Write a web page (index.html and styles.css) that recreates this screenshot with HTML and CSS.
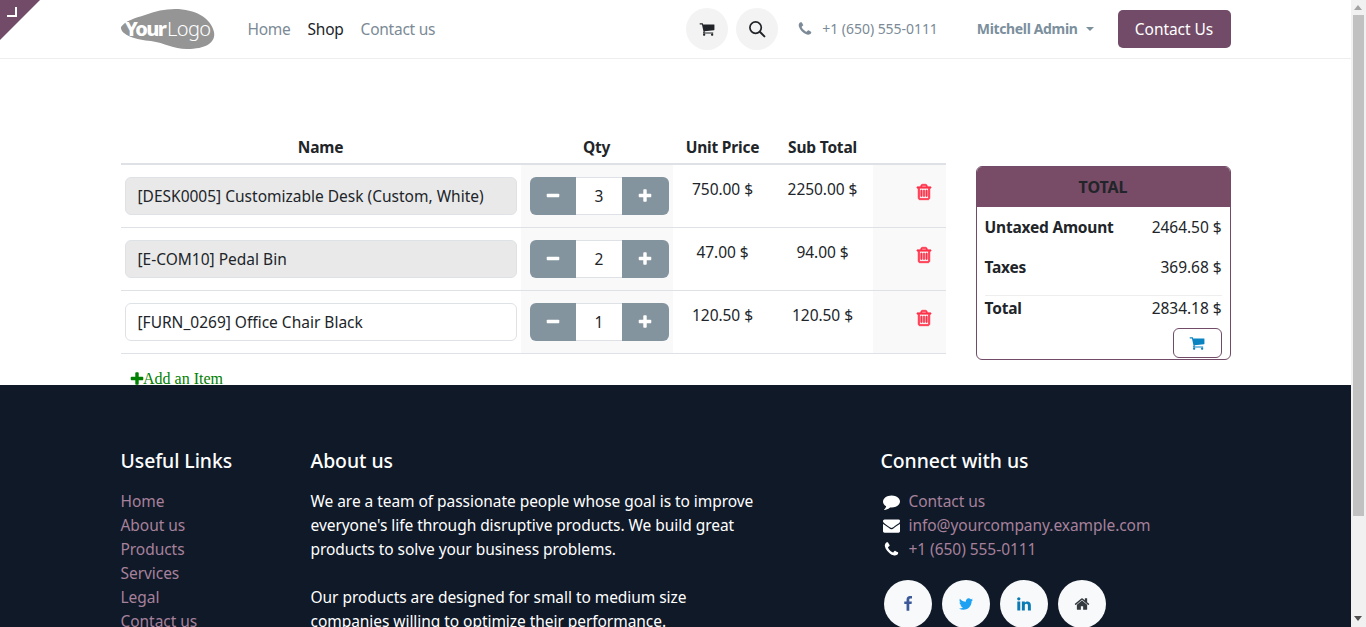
FILE: index.html
```html
<!DOCTYPE html>
<html lang="en">
<head>
<meta charset="utf-8">
<title>Shop</title>
<link rel="stylesheet" href="styles.css">
</head>
<body>
<svg class="sprite" aria-hidden="true">
  <symbol id="i-cart" viewBox="0 0 1792 1792"><path d="M704 1536q0 52-38 90t-90 38-90-38-38-90 38-90 90-38 90 38 38 90zm896 0q0 52-38 90t-90 38-90-38-38-90 38-90 90-38 90 38 38 90zm128-1088v512q0 24-16.5 42.5t-40.5 21.5l-1044 122q13 60 13 70 0 16-24 64h920q26 0 45 19t19 45-19 45-45 19h-1024q-26 0-45-19t-19-45q0-11 8-31.5t16-36 21.5-40 15.5-29.5l-177-823h-204q-26 0-45-19t-19-45 19-45 45-19h256q16 0 28.5 6.5t19.5 15.5 13 24.5 8 26 5.5 29.5 4.5 26h1201q26 0 45 19t19 45z"/></symbol>
  <symbol id="i-search" viewBox="0 0 18 18"><circle cx="7.6" cy="7.6" r="5.7" fill="none" stroke="currentColor" stroke-width="1.7"/><path d="M11.8 11.8l4.6 4.6" fill="none" stroke="currentColor" stroke-width="2" stroke-linecap="round"/></symbol>
  <symbol id="i-phone" viewBox="0 0 1792 1792"><path d="M1600 1240q0 27-10 70.5t-21 68.5q-21 50-122 106-94 51-186 51-27 0-53-3.5t-57.5-12.5-47-14.5-55.5-20.5-49-18q-98-35-175-83-127-79-264-216t-216-264q-48-77-83-175-3-9-18-49t-20.5-55.5-14.5-47-12.5-57.5-3.5-53q0-92 51-186 56-101 106-122 25-11 68.5-21t70.5-10q14 0 21 3 18 6 53 76 11 19 30 54t35 63.5 31 53.5q3 4 17.5 25t21.5 35.5 7 28.5q0 20-28.5 50t-62 55-62 53-28.5 46q0 9 5 22.5t8.5 20.5 14 24 11.5 19q76 137 174 235t235 174q2 1 19 11.5t24 14 20.5 8.5 22.5 5q18 0 46-28.5t53-62 55-62 50-28.5q14 0 28.5 7t35.5 21.5 25 17.5q25 15 53.5 31t63.5 35 54 30q70 35 76 53 3 7 3 21z"/></symbol>
  <symbol id="i-trash" viewBox="0 0 1792 1792"><path stroke="currentColor" stroke-width="70" d="M704 736v576q0 14-9 23t-23 9h-64q-14 0-23-9t-9-23v-576q0-14 9-23t23-9h64q14 0 23 9t9 23zm256 0v576q0 14-9 23t-23 9h-64q-14 0-23-9t-9-23v-576q0-14 9-23t23-9h64q14 0 23 9t9 23zm256 0v576q0 14-9 23t-23 9h-64q-14 0-23-9t-9-23v-576q0-14 9-23t23-9h64q14 0 23 9t9 23zm128 724v-948h-896v948q0 22 7 40.5t14.5 27 10.5 8.5h832q3 0 10.5-8.5t14.5-27 7-40.5zm-672-1076h448l-48-117q-7-9-17-11h-317q-10 2-17 11zm928 32v64q0 14-9 23t-23 9h-96v948q0 83-47 143.5t-113 60.5h-832q-66 0-113-58.5t-47-141.5v-952h-96q-14 0-23-9t-9-23v-64q0-14 9-23t23-9h309l70-167q15-37 54-63t79-26h320q40 0 79 26t54 63l70 167h309q14 0 23 9t9 23z"/></symbol>
  <symbol id="i-plus" viewBox="0 0 1792 1792"><path d="M1600 736v192q0 40-28 68t-68 28h-416v416q0 40-28 68t-68 28h-192q-40 0-68-28t-28-68v-416h-416q-40 0-68-28t-28-68v-192q0-40 28-68t68-28h416v-416q0-40 28-68t68-28h192q40 0 68 28t28 68v416h416q40 0 68 28t28 68z"/></symbol>
  <symbol id="i-minus" viewBox="0 0 1792 1792"><path d="M1600 736v192q0 40-28 68t-68 28h-1216q-40 0-68-28t-28-68v-192q0-40 28-68t68-28h1216q40 0 68 28t28 68z"/></symbol>
  <symbol id="i-comment" viewBox="0 0 1792 1792"><path d="M1792 896q0 174-120 321.5t-326 233-450 85.5q-70 0-145-8-198 175-460 242-49 14-114 22-17 2-30.5-9t-17.5-29v-1q-3-4-.5-12t2-10 4.5-9.5l6-9 7-8.5 8-9q7-8 31-34.5t34.5-38 31-39.5 32.5-51 27-59 26-76q-157-89-247.5-220t-90.5-281q0-130 71-248.5t191-204.5 286-136.5 348-50.5q244 0 450 85.5t326 233 120 321.5z"/></symbol>
  <symbol id="i-envelope" viewBox="0 0 1792 1792"><path d="M1792 710v794q0 66-47 113t-113 47h-1472q-66 0-113-47t-47-113v-794q44 49 101 87 362 246 497 345 57 42 92.5 65.5t94.5 48 110 24.5h2q51 0 110-24.5t94.5-48 92.5-65.5q170-123 498-345 57-39 100-87zm0-294q0 79-49 151t-122 123q-376 261-468 325-10 7-42.5 30.5t-54 38-52 32.5-57.5 27-50 9h-2q-23 0-50-9t-57.5-27-52-32.5-54-38-42.5-30.5q-91-64-262-182.5t-205-142.5q-62-42-117-115.5t-55-136.5q0-78 41.5-130t118.5-52h1472q65 0 112.5 47t47.5 113z"/></symbol>
  <symbol id="i-facebook" viewBox="0 0 1792 1792"><path d="M1343 12v264h-157q-86 0-116 36t-30 108v189h293l-39 296h-254v759h-306v-759h-255v-296h255v-218q0-186 104-288.5t277-102.5q147 0 228 12z"/></symbol>
  <symbol id="i-twitter" viewBox="0 0 1792 1792"><path d="M1684 408q-67 98-162 167 1 14 1 42 0 130-38 259.5t-115.5 248.5-184.5 210.5-258 146-323 54.5q-271 0-496-145 35 4 76 4 225 0 401-138-105-2-188-64.5t-114-159.5q33 5 61 5 43 0 85-11-112-23-185.5-111.5t-73.5-205.5v-4q68 38 146 41-66-44-105-115t-39-154q0-88 44-163 121 149 294.5 238.5t371.5 99.5q-8-38-8-74 0-134 94.5-228.5t228.5-94.5q140 0 236 102 109-21 205-78-37 115-142 178 91-10 182-49z"/></symbol>
  <symbol id="i-linkedin" viewBox="0 0 1792 1792"><path d="M477 625v991h-330v-991h330zm21-306q1 73-50.5 122t-135.5 49h-2q-82 0-132-49t-50-122q0-74 51.5-122.5t134.5-48.5 133 48.5 51 122.5zm1166 729v568h-329v-530q0-105-40.5-164.5t-126.5-59.5q-63 0-105.5 34.5t-63.5 85.5q-11 30-11 81v553h-329q2-399 2-647t-1-296l-1-48h329v144h-2q20-32 41-56t56.5-52 87-43.5 114.5-15.5q171 0 275 113.5t104 332.5z"/></symbol>
  <symbol id="i-home" viewBox="0 0 1792 1792"><path d="M1472 992v480q0 26-19 45t-45 19h-384v-384h-256v384h-384q-26 0-45-19t-19-45v-480q0-1 .5-3t.5-3l575-474 575 474q1 2 1 6zm223-69l-62 74q-8 9-21 11h-3q-13 0-21-7l-692-577-692 577q-12 8-24 7-13-2-21-11l-62-74q-8-10-7-23.5t11-21.5l719-599q32-26 76-26t76 26l244 204v-195q0-14 9-23t23-9h192q14 0 23 9t9 23v408l219 182q10 8 11 21.5t-7 23.5z"/></symbol>
</svg>

<div class="app">
  <div class="page">
    <a class="corner" href="#" aria-label="Edit"><span class="corner-mark"></span></a>

    <header class="topbar">
      <div class="container topbar-inner">
        <svg class="logo" viewBox="0 0 94 40" aria-label="YourLogo">
          <path class="logo-blob" d="M0 18C4 12 14 9 24 6 34 2 44 0 54 0 74 0 90 9 93 23 95 34 84 40 66 40 52 40 44 34 30 32 16 31-1 26 0 18Z"/>
          <text class="logo-your" x="4" y="27">Your</text>
          <text class="logo-logo" x="46" y="27">Logo</text>
        </svg>
        <nav class="nav">
          <a class="nav-link" href="#">Home</a>
          <a class="nav-link nav-active" href="#">Shop</a>
          <a class="nav-link" href="#">Contact us</a>
        </nav>
        <div class="topbar-right">
          <a class="circle-btn" href="#"><svg class="icon-16"><use href="#i-cart"/></svg></a>
          <a class="circle-btn" href="#"><svg class="icon-18"><use href="#i-search"/></svg></a>
          <div class="top-phone"><svg class="icon-16"><use href="#i-phone"/></svg><span>+1 (650) 555-0111</span></div>
          <div class="user">Mitchell Admin<span class="caret"></span></div>
          <a class="cta" href="#">Contact Us</a>
        </div>
      </div>
    </header>

    <main class="content">
      <div class="container order">
        <div class="order-lines">
          <table class="lines">
            <colgroup>
              <col class="col-name"><col class="col-qty"><col class="col-price"><col class="col-price"><col class="col-del">
            </colgroup>
            <thead>
              <tr><th>Name</th><th>Qty</th><th>Unit Price</th><th>Sub Total</th><th></th></tr>
            </thead>
            <tbody>
              <tr>
                <td class="td-name"><div class="field field-off">[DESK0005] Customizable Desk (Custom, White)</div></td>
                <td class="td-qty"><div class="stepper"><button class="step"><svg class="icon-16"><use href="#i-minus"/></svg></button><span class="qty">3</span><button class="step"><svg class="icon-16"><use href="#i-plus"/></svg></button></div></td>
                <td>750.00 $</td>
                <td>2250.00 $</td>
                <td class="td-del"><svg class="icon-18"><use href="#i-trash"/></svg></td>
              </tr>
              <tr>
                <td class="td-name"><div class="field field-off">[E-COM10] Pedal Bin</div></td>
                <td class="td-qty"><div class="stepper"><button class="step"><svg class="icon-16"><use href="#i-minus"/></svg></button><span class="qty">2</span><button class="step"><svg class="icon-16"><use href="#i-plus"/></svg></button></div></td>
                <td>47.00 $</td>
                <td>94.00 $</td>
                <td class="td-del"><svg class="icon-18"><use href="#i-trash"/></svg></td>
              </tr>
              <tr>
                <td class="td-name"><div class="field">[FURN_0269] Office Chair Black</div></td>
                <td class="td-qty"><div class="stepper"><button class="step"><svg class="icon-16"><use href="#i-minus"/></svg></button><span class="qty">1</span><button class="step"><svg class="icon-16"><use href="#i-plus"/></svg></button></div></td>
                <td>120.50 $</td>
                <td>120.50 $</td>
                <td class="td-del"><svg class="icon-18"><use href="#i-trash"/></svg></td>
              </tr>
            </tbody>
          </table>
          <a class="add-item" href="#"><svg class="icon-add"><use href="#i-plus"/></svg>Add an Item</a>
        </div>

        <aside class="total">
          <div class="total-head">TOTAL</div>
          <div class="total-row"><strong>Untaxed Amount</strong><span>2464.50 $</span></div>
          <div class="total-row"><strong>Taxes</strong><span>369.68 $</span></div>
          <div class="total-row total-sum"><strong>Total</strong><span>2834.18 $</span></div>
          <div class="total-actions"><a class="cart-btn" href="#"><svg class="icon-16"><use href="#i-cart"/></svg></a></div>
        </aside>
      </div>
    </main>

    <footer class="footer">
      <div class="container footer-grid">
        <section>
          <h5 class="foot-title">Useful Links</h5>
          <ul class="foot-list">
            <li><a href="#">Home</a></li>
            <li><a href="#">About us</a></li>
            <li><a href="#">Products</a></li>
            <li><a href="#">Services</a></li>
            <li><a href="#">Legal</a></li>
            <li><a href="#">Contact us</a></li>
          </ul>
        </section>
        <section>
          <h5 class="foot-title">About us</h5>
          <p class="foot-text">We are a team of passionate people whose goal is to improve<br>everyone's life through disruptive products. We build great<br>products to solve your business problems.</p>
          <p class="foot-text foot-text-next">Our products are designed for small to medium size<br>companies willing to optimize their performance.</p>
        </section>
        <section class="foot-connect">
          <h5 class="foot-title">Connect with us</h5>
          <ul class="foot-list">
            <li class="contact"><svg class="icon-white"><use href="#i-comment"/></svg><a href="#">Contact us</a></li>
            <li class="contact"><svg class="icon-white"><use href="#i-envelope"/></svg><a href="#">info@yourcompany.example.com</a></li>
            <li class="contact"><svg class="icon-white"><use href="#i-phone"/></svg><a href="#">+1 (650) 555-0111</a></li>
          </ul>
          <div class="socials">
            <a class="social s-fb" href="#"><svg class="icon-16"><use href="#i-facebook"/></svg></a>
            <a class="social s-tw" href="#"><svg class="icon-16"><use href="#i-twitter"/></svg></a>
            <a class="social s-li" href="#"><svg class="icon-16"><use href="#i-linkedin"/></svg></a>
            <a class="social s-ho" href="#"><svg class="icon-16"><use href="#i-home"/></svg></a>
          </div>
        </section>
      </div>
    </footer>
  </div>

  <div class="scrollbar" aria-hidden="true">
    <span class="scroll-up"></span>
    <span class="scroll-thumb"></span>
    <span class="scroll-down"></span>
  </div>
</div>
</body>
</html>
```

FILE: styles.css
```css
* { box-sizing: border-box; }

html, body {
  margin: 0;
  height: 100%;
  overflow: hidden;
}

body {
  font-family: "Noto Sans", "Open Sans", sans-serif;
  font-size: 15.5px;
  letter-spacing: -0.05px;
  line-height: 24px;
  color: #212529;
  background: #fff;
}

a { text-decoration: none; color: inherit; }
svg { fill: currentColor; display: block; flex: none; }
strong, th { letter-spacing: -0.2px; }

.sprite { display: none; }

.icon-16 { width: 16px; height: 16px; }
.icon-18 { width: 18px; height: 18px; }

.app {
  display: flex;
  height: 627px;
  overflow: hidden;
}

.page {
  position: relative;
  width: 1351px;
  flex: none;
  height: 627px;
  overflow: hidden;
}

.container {
  width: 1110px;
  margin: 0 auto;
}

/* Corner ribbon */
.corner {
  position: absolute;
  left: 0;
  top: 0;
  width: 40px;
  height: 40px;
  background: #714b67;
  clip-path: polygon(0 0, 100% 0, 0 100%);
  z-index: 2;
}

.corner-mark {
  position: absolute;
  left: 7px;
  top: 7px;
  width: 10px;
  height: 10px;
  border-right: 2px solid #fff;
  border-bottom: 2px solid #fff;
}

/* Top bar */
.topbar {
  height: 59px;
  border-bottom: 1px solid #eeeeee;
  background: #fff;
}

.topbar-inner {
  display: flex;
  align-items: center;
  height: 58px;
}

.logo {
  width: 94px;
  height: 40px;
  overflow: visible;
}

.logo-blob { fill: #959595; }
.logo-your { font-family: "Noto Sans", sans-serif; font-weight: 800; font-size: 20px; letter-spacing: -1.6px; fill: #fff; }
.logo-logo { font-family: "Noto Sans", sans-serif; font-weight: 300; font-size: 20px; letter-spacing: -0.6px; fill: #fff; }

.nav {
  display: flex;
  gap: 17px;
  margin-left: 33px;
  letter-spacing: -0.25px;
}

.nav-link { color: #7b8a96; }
.nav-active { color: #212529; }

.topbar-right {
  display: flex;
  align-items: center;
  margin-left: auto;
}

.circle-btn {
  display: flex;
  align-items: center;
  justify-content: center;
  width: 42px;
  height: 42px;
  margin-right: 8px;
  border-radius: 50%;
  background: #f3f3f3;
  color: #212529;
}

.top-phone {
  display: flex;
  align-items: center;
  gap: 9px;
  margin-left: 11px;
  color: #7b8a96;
  font-size: 14px;
}

.user {
  display: flex;
  align-items: center;
  margin-left: 39px;
  font-size: 14px;
  font-weight: 700;
  letter-spacing: -0.35px;
  color: #7b8f9d;
}

.caret {
  margin-left: 8px;
  border-top: 4.5px solid #7b8f9d;
  border-left: 4.5px solid transparent;
  border-right: 4.5px solid transparent;
}

.cta {
  display: flex;
  align-items: center;
  justify-content: center;
  width: 113px;
  height: 38px;
  margin-left: 24px;
  border-radius: 5px;
  background: #714b67;
  color: #fff;
}

/* Order section */
.content {
  height: 326px;
  overflow: hidden;
  padding-top: 73px;
}

.order {
  display: flex;
  align-items: flex-start;
}

.order-lines { width: 825px; flex: none; }

.lines {
  width: 825px;
  table-layout: fixed;
  border-collapse: collapse;
}

.col-name { width: 400px; }
.col-qty { width: 152px; }
.col-price { width: 100px; }
.col-del { width: 73px; }

.lines th {
  height: 32px;
  padding: 2px 0 4px;
  font-weight: 700;
  text-align: center;
  border-bottom: 2px solid #dee2e6;
}

.lines td {
  height: 63px;
  padding: 12px 4px;
  text-align: center;
  vertical-align: top;
  border-bottom: 1px solid #dee2e6;
}

.lines .td-qty, .lines .td-del { background: #f9f9f9; }
.lines .td-qty { padding-left: 9px; padding-right: 4px; }

.lines .td-del {
  color: #ff3048;
  padding: 18px 13px 0 0;
}

.td-del svg { margin-left: auto; }

.field {
  height: 38px;
  padding: 6px 12px;
  border: 1px solid #dee2e6;
  border-radius: 6px;
  background: #fff;
  text-align: left;
  white-space: nowrap;
  letter-spacing: 0;
}

.field-off { background: #e9e9e9; }

.stepper {
  display: flex;
  width: 139px;
  height: 38px;
  border-radius: 6px;
  overflow: hidden;
}

.step {
  display: flex;
  align-items: center;
  justify-content: center;
  width: 46.5px;
  flex: none;
  padding: 0;
  border: 0;
  background: #84949f;
  color: #fff;
}

.qty {
  flex: 1;
  line-height: 36px;
  border-top: 1px solid #dee2e6;
  border-bottom: 1px solid #dee2e6;
  background: #fff;
}

.add-item {
  display: flex;
  align-items: center;
  margin: 13px 0 0 8px;
  color: #008000;
  font-family: "Liberation Serif", serif;
  font-size: 16px;
  letter-spacing: 0;
}

.icon-add { width: 16px; height: 16px; margin-right: -1.5px; }

/* Total card */
.total {
  width: 255px;
  height: 194px;
  margin: 34px 0 0 30px;
  border: 1px solid #714b67;
  border-radius: 6px;
  overflow: hidden;
}

.total-head {
  height: 40px;
  background: #784b66;
  color: #212529;
  font-size: 16px;
  font-weight: 700;
  text-align: center;
  line-height: 40px;
}

.total-row {
  display: flex;
  justify-content: space-between;
  align-items: center;
  height: 40px;
  margin: 0 8px;
}

.total-sum {
  height: 25px;
  margin-top: 8px;
  border-top: 1px solid #eeeeee;
}

.total-actions {
  display: flex;
  justify-content: flex-end;
  margin: 8px 8px 0;
}

.cart-btn {
  display: flex;
  align-items: center;
  justify-content: center;
  width: 49px;
  height: 30px;
  border: 1px solid #714b67;
  border-radius: 6px;
  color: #0a84c1;
}

/* Footer */
.footer {
  height: 242px;
  overflow: hidden;
  padding-top: 60px;
  background: #0f1928;
  color: #fff;
}

.footer-grid {
  display: grid;
  grid-template-columns: 190px 570px 350px;
}

.foot-title {
  margin: 0 0 12px;
  font-size: 19.4px;
  line-height: 32px;
  font-weight: 500;
}

.foot-list {
  margin: 0;
  padding: 0;
  list-style: none;
  color: #a7819b;
}

.foot-text {
  margin: 0;
  white-space: nowrap;
}

.foot-text-next { margin-top: 24px; }

.contact {
  display: flex;
  align-items: center;
  gap: 9px;
}

.icon-white {
  width: 17px;
  height: 17px;
  margin-left: 2px;
  color: #fff;
}

.socials {
  display: flex;
  gap: 10px;
  margin: 19px 0 0 3px;
}

.social {
  display: flex;
  align-items: center;
  justify-content: center;
  width: 48px;
  height: 48px;
  border-radius: 50%;
  background: #f8f9fa;
}

.s-fb { color: #3b5998; }
.s-tw { color: #1da1f2; }
.s-li { color: #0a7bb5; }
.s-ho { color: #343a40; }

/* Scrollbar */
.scrollbar {
  position: relative;
  width: 15px;
  flex: none;
  background: #f1f1f1;
}

.scroll-up {
  position: absolute;
  left: 3px;
  top: 5px;
  border-bottom: 5px solid #a3a3a3;
  border-left: 4.5px solid transparent;
  border-right: 4.5px solid transparent;
}

.scroll-thumb {
  position: absolute;
  left: 2px;
  right: 2px;
  top: 15px;
  height: 501px;
  background: #c1c1c1;
}

.scroll-down {
  position: absolute;
  left: 3px;
  bottom: 6px;
  border-top: 5px solid #505050;
  border-left: 4.5px solid transparent;
  border-right: 4.5px solid transparent;
}
```
